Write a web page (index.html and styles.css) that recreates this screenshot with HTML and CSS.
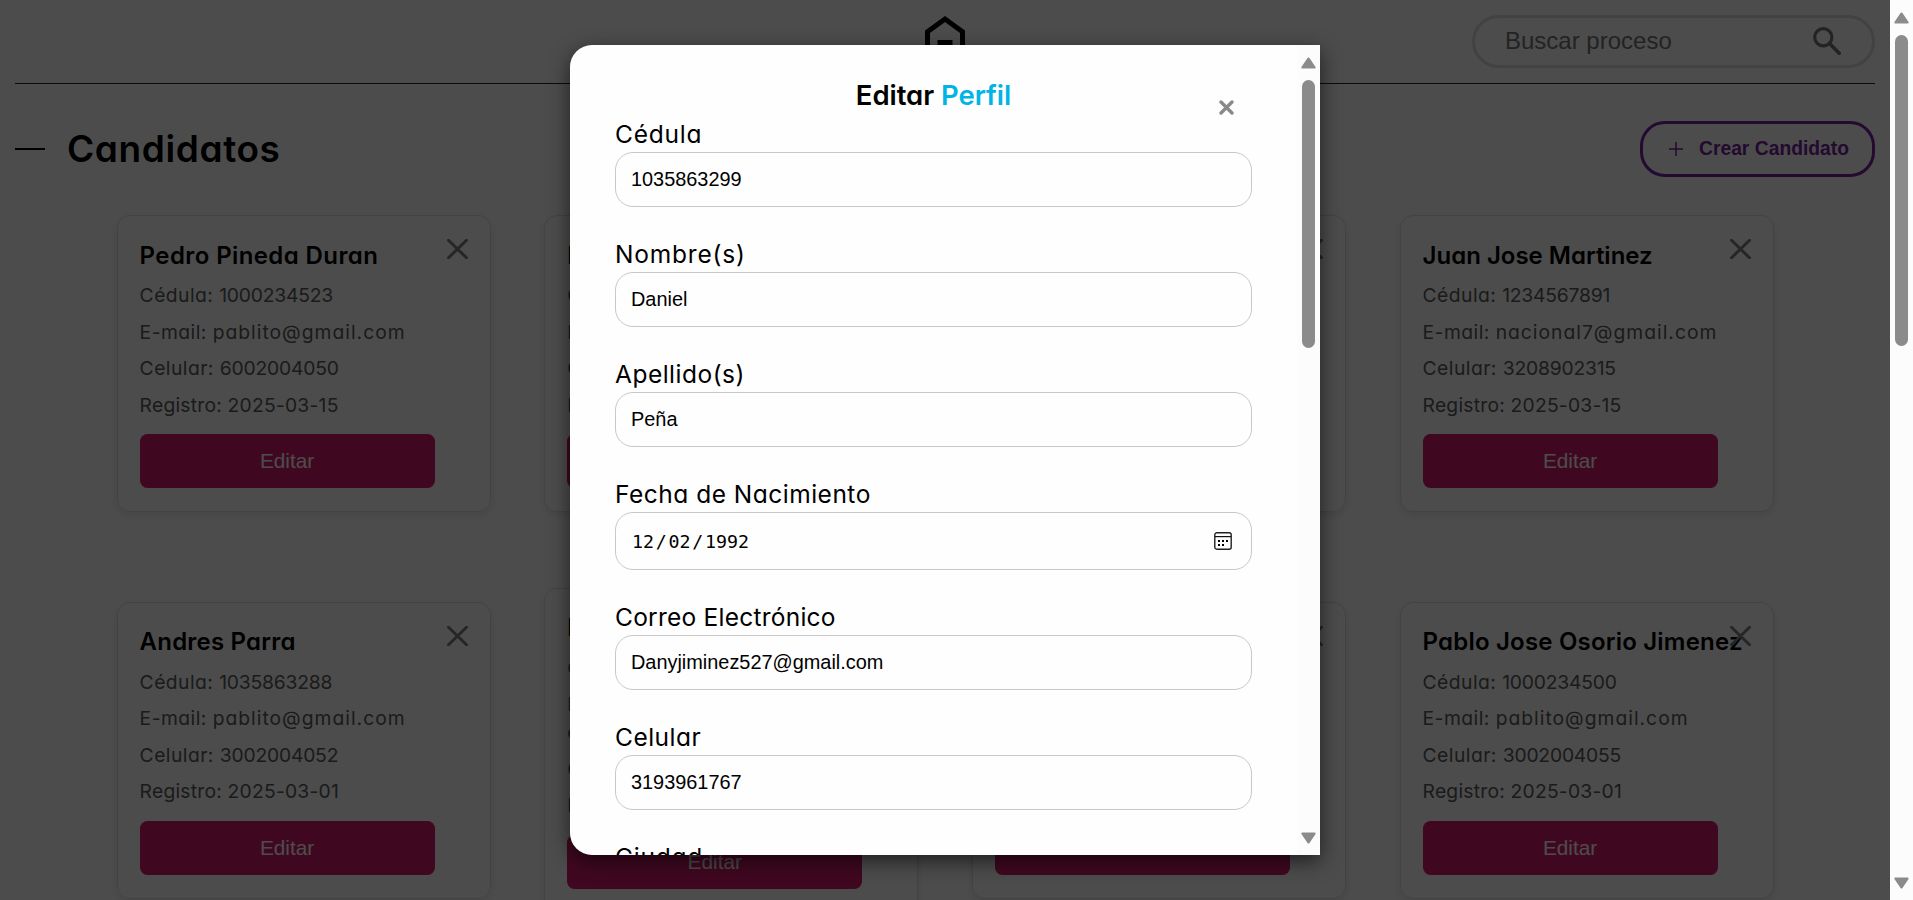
FILE: index.html
```html
<!DOCTYPE html>
<html lang="es">
<head>
<meta charset="utf-8">
<title>Candidatos</title>
<link rel="stylesheet" href="styles.css">
</head>
<body>
<svg class="defs" width="0" height="0" aria-hidden="true">
  <symbol id="cross" viewBox="0 0 21 20"><path d="M1.5 1.2 19.5 18.8M19.5 1.2 1.5 18.8" fill="none" stroke="currentColor" stroke-width="3" stroke-linecap="round"/></symbol>
  <symbol id="arrow" viewBox="0 0 15 12"><path d="M7.5 1.7 13.4 10.4H1.6Z" fill="#8b8b8b" stroke="#8b8b8b" stroke-width="2.4" stroke-linejoin="round"/></symbol>
</svg>
<div class="page">
  <header class="topbar">
    <div class="topbar-side"></div>
    <svg class="logo" width="40" height="52" viewBox="0 0 40 52"><path d="M2.5 51V16.800L20 4.100 37.500 16.800V51" fill="none" stroke="#000" stroke-width="5"/><path d="M12.500 25h15v6h-15z"/></svg>
    <div class="topbar-side">
      <div class="search">
        <span class="search-text">Buscar proceso</span>
        <svg class="lens" width="28" height="28" viewBox="0 0 28 28"><circle cx="10.300" cy="10.300" r="8.600" fill="none" stroke="#777" stroke-width="3.200"/><path d="M16.500 16.500 26.200 26.200" stroke="#777" stroke-width="3.700" stroke-linecap="round"/></svg>
      </div>
    </div>
  </header>
  <section class="heading">
    <span class="dash"></span>
    <h1>Candidatos</h1>
    <button class="create"><svg width="14" height="14" viewBox="0 0 14 14"><path d="M7 0v14M0 7h14" stroke="#7b1fa2" stroke-width="1.500"/></svg><span>Crear Candidato</span></button>
  </section>
  <main class="grid">
    <article class="card"><svg class="remove"><use href="#cross"/></svg><h2 class="loose">Pedro Pineda Duran</h2><p>Cédula: <span class="num">1000234523</span></p><p>E-mail: <span class="mail">pablito@gmail.com</span></p><p>Celular: <span class="num">6002004050</span></p><p class="reg">Registro: 2025-03-15</p><button class="edit">Editar</button></article>
    <article class="card"><svg class="remove"><use href="#cross"/></svg><h2>Pablo Perez</h2><p>Cédula: <span class="num">1000234524</span></p><p>E-mail: <span class="mail">pablito@gmail.com</span></p><p>Celular: <span class="num">3002004050</span></p><p class="reg">Registro: 2025-03-15</p><button class="edit">Editar</button></article>
    <article class="card"><svg class="remove"><use href="#cross"/></svg><h2>Pedro Perez</h2><p>Cédula: <span class="num">1000234525</span></p><p>E-mail: <span class="mail">pablito@gmail.com</span></p><p>Celular: <span class="num">3002004051</span></p><p class="reg">Registro: 2025-03-15</p><button class="edit">Editar</button></article>
    <article class="card"><svg class="remove"><use href="#cross"/></svg><h2 class="tight">Juan Jose Martinez</h2><p>Cédula: <span class="num">1234567891</span></p><p>E-mail: <span class="mail">nacional7@gmail.com</span></p><p>Celular: <span class="num">3208902315</span></p><p class="reg">Registro: 2025-03-15</p><button class="edit">Editar</button></article>
    <article class="card"><svg class="remove"><use href="#cross"/></svg><h2>Andres Parra</h2><p>Cédula: <span class="num">1035863288</span></p><p>E-mail: <span class="mail">pablito@gmail.com</span></p><p>Celular: <span class="num">3002004052</span></p><p class="reg">Registro: 2025-03-01</p><button class="edit">Editar</button></article>
    <article class="card"><svg class="remove"><use href="#cross"/></svg><h2>Daniel Peña</h2><p>Cédula: <span class="num">1035863299</span></p><p>E-mail: <span class="mail">Danyjiminez527@gmail.<br>com</span></p><p>Celular: <span class="num">3193961767</span></p><p class="reg">Registro: 2025-03-01</p><button class="edit">Editar</button></article>
    <article class="card"><svg class="remove"><use href="#cross"/></svg><h2>Pablo Perez</h2><p>Cédula: <span class="num">1000234501</span></p><p>E-mail: <span class="mail">pablito@gmail.com</span></p><p>Celular: <span class="num">3002004054</span></p><p class="reg">Registro: 2025-03-01</p><button class="edit">Editar</button></article>
    <article class="card"><svg class="remove"><use href="#cross"/></svg><h2>Pablo Jose Osorio Jimenez</h2><p>Cédula: <span class="num">1000234500</span></p><p>E-mail: <span class="mail">pablito@gmail.com</span></p><p>Celular: <span class="num">3002004055</span></p><p class="reg">Registro: 2025-03-01</p><button class="edit">Editar</button></article>
  </main>
</div>
<div class="scrollbar">
  <svg class="up"><use href="#arrow"/></svg><div class="thumb"></div><svg class="down"><use href="#arrow"/></svg>
</div>
<div class="overlay">
  <div class="modal">
    <form class="form">
      <svg class="close" viewBox="0 0 15 15"><path d="M2 2 13 13M13 2 2 13" stroke="#888" stroke-width="3.300" stroke-linecap="round"/></svg>
      <h3>Editar <span>Perfil</span></h3>
      <label class="loose">Cédula</label><div class="input">1035863299</div>
      <label class="loose">Nombre(s)</label><div class="input">Daniel</div>
      <label>Apellido(s)</label><div class="input">Peña</div>
      <label>Fecha de Nacimiento</label>
      <div class="input date"><span class="digits">12<i>/</i>02<i>/</i>1992</span>
        <svg width="18" height="18" viewBox="0 0 18 18"><rect x=".8" y=".8" width="16.400" height="16.400" rx="2" fill="none" stroke="#222" stroke-width="1.400"/><path d="M1 4.600h16" stroke="#111" stroke-width="1.200"/><path d="M4 8h2v2H4zM8 8h2v2H8zM12 8h2v2h-2zM4 12h2v2H4zM8 12h2v2H8z"/></svg>
      </div>
      <label class="tight">Correo Electrónico</label><div class="input">Danyjiminez527@gmail.com</div>
      <label>Celular</label><div class="input">3193961767</div>
      <label class="loose">Ciudad</label>
    </form>
    <div class="scrollbar inner">
      <svg class="up"><use href="#arrow"/></svg><div class="thumb"></div><svg class="down"><use href="#arrow"/></svg>
    </div>
  </div>
</div>
</body>
</html>
```
FILE: styles.css
```css
* { box-sizing: border-box; margin: 0; padding: 0; }
html, body { height: 900px; overflow: hidden; }
body {
  display: flex;
  background: #fff;
  color: #000;
  font-family: Inter, "Open Sans", sans-serif;
  font-feature-settings: "cv11";
}
button { font-family: "Liberation Sans", Arial, sans-serif; }
.defs { position: absolute; }
.page { width: 1890px; height: 900px; padding: 0 15px; overflow: hidden; }

.topbar { display: flex; justify-content: space-between; height: 84px; padding-top: 15px; border-bottom: 1px solid #222; }
.topbar-side { flex: 1; display: flex; justify-content: flex-end; }
.search {
  display: flex; align-items: center; justify-content: space-between;
  width: 403px; height: 53px; padding: 0 31px 0 30px;
  border: 3px solid #ddd; border-radius: 27px;
}
.search-text { font: 24px "Liberation Sans", Arial, sans-serif; color: #757575; margin-bottom: 2px; }
.lens { margin-bottom: 2px; }

.heading { display: flex; align-items: center; height: 131px; padding-bottom: 2px; }
.dash { width: 30px; height: 2px; background: #000; }
.heading h1 { flex: 1; margin-left: 22px; padding-top: 1px; font-size: 37px; line-height: 50px; font-weight: 600; letter-spacing: .6px; }
.create {
  display: flex; align-items: center; gap: 16px;
  width: 235px; height: 56px; padding-left: 26px;
  background: none; border: 3px solid #7b1fa2; border-radius: 25px;
  color: #7b1fa2; font-size: 19.300px; font-weight: 700;
}
.create span { white-space: nowrap; }

.grid {
  display: grid; grid-template-columns: repeat(4, 374px);
  column-gap: 53.670px; row-gap: 75.400px; align-items: center;
  margin-left: 101.600px;
}
.card {
  position: relative; padding: 20.800px 22.500px 22.900px 22px;
  border: 1px solid #e0e0e0; border-radius: 13px;
  box-shadow: 0 3px 8px rgba(0, 0, 0, .1);
}
.card h2 { font-size: 24px; line-height: 38px; font-weight: 600; white-space: nowrap; margin-bottom: 2px; letter-spacing: .2px; }
.card h2.loose { letter-spacing: .4px; }
.card h2.tight { letter-spacing: 0; }
.card p { font-size: 19.300px; line-height: 28px; padding: 4.250px 0; color: #5a5a5a; white-space: nowrap; letter-spacing: .45px; }
.card .mail { letter-spacing: 1px; }
.card .num { letter-spacing: -.2px; }
.card .reg { letter-spacing: .22px; }
.edit {
  display: block; width: 295px; height: 54px; margin-top: 11.600px;
  background: #d81b6c; border: 0; border-radius: 7.500px;
  color: #fff; font-size: 20.800px;
}
.remove { position: absolute; right: 22px; top: 23px; width: 21px; height: 20px; color: #808080; }

.overlay {
  position: absolute; left: 0; top: 0; width: 1890px; height: 900px;
  display: flex; align-items: center; justify-content: center;
  background: rgba(0, 0, 0, .7);
}
.modal {
  display: flex; width: 750px; height: 810px; overflow: hidden;
  background: #fefefe; border-radius: 22px 0 0 22px;
  box-shadow: 0 6px 20px rgba(0, 0, 0, .6);
}
.form { position: relative; width: 727px; height: 810px; padding: 30px 45px 0; overflow: hidden; }
.form h3 { height: 42px; text-align: center; font-size: 27.500px; line-height: 41px; font-weight: 600; letter-spacing: -.05px; }
.form h3 span { color: #00b4e6; }
.form label { display: block; height: 35px; font-size: 24.500px; line-height: 35px; white-space: nowrap; letter-spacing: .5px; }
.form label.loose { letter-spacing: .8px; }
.form label.tight { letter-spacing: .24px; }
.input {
  display: flex; align-items: center; height: 55px; margin-bottom: 30px; padding: 0 17px 0 15px;
  border: 1px solid #c8c8c8; border-radius: 18px;
  font: 19.900px "Liberation Sans", Arial, sans-serif;
}
.date { height: 58px; justify-content: space-between; padding-right: 19px; }
.digits { font: 18.300px "DejaVu Sans Mono", monospace; padding-left: 1px; }
.digits i { display: inline-block; width: 14.500px; text-align: center; font-style: normal; }
.close { position: absolute; left: 649px; top: 55px; width: 15px; height: 15px; }

.scrollbar { display: flex; flex-direction: column; align-items: center; width: 23px; height: 900px; padding: 12px 0 11px; background: #fcfcfc; }
.scrollbar svg { width: 15px; height: 12px; }
.scrollbar .thumb { width: 13px; height: 311px; margin: 11px 0 auto; border-radius: 7px; background: #8b8b8b; }
.scrollbar .down { transform: rotate(180deg); }
.scrollbar.inner { height: 810px; }
.scrollbar.inner .thumb { height: 268px; }
```
